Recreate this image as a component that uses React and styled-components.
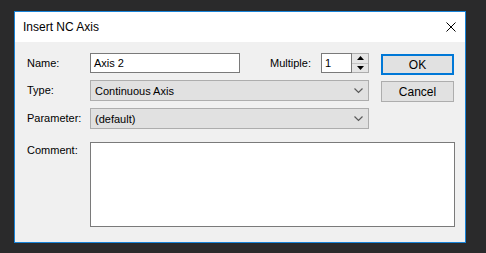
import React from "react";
import styled, { createGlobalStyle } from "styled-components";

const GlobalStyle = createGlobalStyle`
  html, body { margin: 0; padding: 0; background: #2a2a2b; }
  body {
    font-family: "Liberation Sans", Arial, sans-serif;
    font-size: 11px;
    color: #000;
  }
`;

const Desktop = styled.div`
  width: 486px;
  height: 253px;
  padding: 11px 0 0 14px;
  box-sizing: border-box;
  overflow: hidden;
`;

const Window = styled.div`
  width: 452px;
  height: 232px;
  box-sizing: border-box;
  border: 1px solid #1883d7;
  background: #f0f0f0;
  display: flex;
  flex-direction: column;
`;

const TitleBar = styled.div`
  height: 30px;
  background: #fff;
  display: flex;
  align-items: center;
  justify-content: space-between;
  padding: 0 9px 0 8px;
  font-size: 12px;
`;

const CloseButton = styled.div`
  width: 10px;
  height: 10px;
  display: flex;
  svg { display: block; }
`;

const Body = styled.div`
  padding: 11px 0 0 12px;
  display: grid;
  grid-template-columns: 51px 279px 73px;
  grid-template-rows: 20px 21px 21px 85px;
  column-gap: 12px;
  row-gap: 7px;
  align-items: start;
`;

const Label = styled.div`
  height: 20px;
  line-height: 20px;
  white-space: nowrap;
  padding-top: ${p => p.$top || 0}px;
`;

const FieldRow = styled.div`
  display: flex;
  align-items: center;
  justify-content: space-between;
  height: 20px;
`;

const TextBox = styled.div`
  box-sizing: border-box;
  width: ${p => p.$w}px;
  height: 20px;
  border: 1px solid #7a7a7a;
  background: #fff;
  padding: 0 3px;
  line-height: 18px;
`;

const MultipleGroup = styled.div`
  display: flex;
  align-items: center;
`;

const MultipleLabel = styled.span`
  margin-right: 10px;
`;

const Spinner = styled.div`
  box-sizing: border-box;
  width: 17px;
  height: 20px;
  border: 1px solid #adadad;
  border-left: none;
  background: #e6e6e6;
  display: flex;
  flex-direction: column;
`;

const SpinHalf = styled.div`
  flex: 1;
  display: flex;
  align-items: center;
  justify-content: center;
  border-top: ${p => (p.$bottom ? "1px solid #c4c4c4" : "none")};
`;

const Combo = styled.div`
  box-sizing: border-box;
  height: 21px;
  border: 1px solid #adadad;
  background: #e1e1e1;
  display: flex;
  align-items: center;
  justify-content: space-between;
  padding: 0 5px 0 4px;
`;

const Button = styled.div`
  box-sizing: border-box;
  height: 21px;
  margin-top: 1px;
  background: #e1e1e1;
  border: ${p => (p.$default ? "2px solid #0078d7" : "1px solid #adadad")};
  display: flex;
  align-items: center;
  justify-content: center;
  font-size: 12px;
`;

const CommentArea = styled.div`
  grid-column: 2 / 4;
  box-sizing: border-box;
  width: 365px;
  height: 85px;
  margin-top: 6px;
  border: 1px solid #7a7a7a;
  background: #fff;
`;

const Chevron = () => (
  <svg width="9" height="6" viewBox="0 0 9 6">
    <polyline points="0.5,0.5 4.5,4.5 8.5,0.5" fill="none" stroke="#5a5a5a" strokeWidth="1.2" />
  </svg>
);

const Arrow = ({ down }) => (
  <svg width="7" height="4" viewBox="0 0 7 4">
    <polygon points={down ? "0,0 7,0 3.5,4" : "0,4 7,4 3.5,0"} fill="#000" />
  </svg>
);

const App = () => (
  <>
    <GlobalStyle />
    <Desktop>
      <Window>
        <TitleBar>
          <span>Insert NC Axis</span>
          <CloseButton>
            <svg width="10" height="10" viewBox="0 0 10 10">
              <path d="M0.5 0.5 L9.5 9.5 M9.5 0.5 L0.5 9.5" stroke="#000" strokeWidth="1" />
            </svg>
          </CloseButton>
        </TitleBar>
        <Body>
          <Label>Name:</Label>
          <FieldRow>
            <TextBox $w={150}>Axis 2</TextBox>
            <MultipleGroup>
              <MultipleLabel>Multiple:</MultipleLabel>
              <TextBox $w={31}>1</TextBox>
              <Spinner>
                <SpinHalf><Arrow /></SpinHalf>
                <SpinHalf $bottom><Arrow down /></SpinHalf>
              </Spinner>
            </MultipleGroup>
          </FieldRow>
          <Button $default>OK</Button>

          <Label>Type:</Label>
          <Combo>
            <span>Continuous Axis</span>
            <Chevron />
          </Combo>
          <Button>Cancel</Button>

          <Label>Parameter:</Label>
          <Combo>
            <span>(default)</span>
            <Chevron />
          </Combo>
          <div />

          <Label $top={4}>Comment:</Label>
          <CommentArea />
        </Body>
      </Window>
    </Desktop>
  </>
);

export default App;
